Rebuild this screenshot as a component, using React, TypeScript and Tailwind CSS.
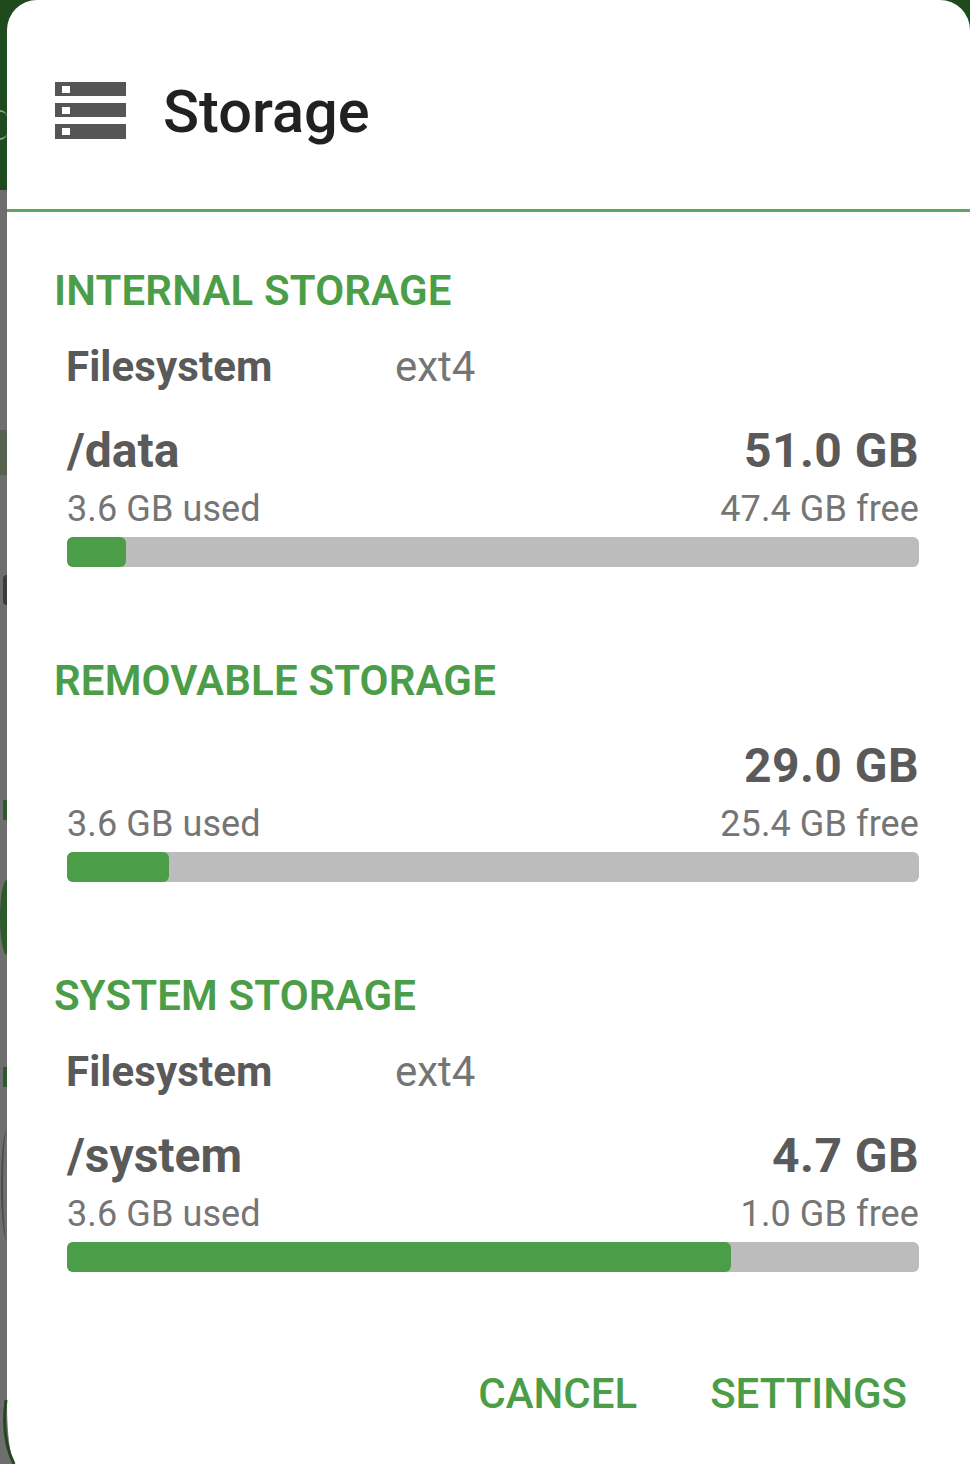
import React from 'react';

type Volume = {
  title: string;
  filesystem?: string;
  mount?: string;
  total: string;
  used: string;
  free: string;
  fill: number;
};

const volumes: Volume[] = [
  { title: 'INTERNAL STORAGE', filesystem: 'ext4', mount: '/data', total: '51.0 GB', used: '3.6 GB used', free: '47.4 GB free', fill: 59 },
  { title: 'REMOVABLE STORAGE', total: '29.0 GB', used: '3.6 GB used', free: '25.4 GB free', fill: 102 },
  { title: 'SYSTEM STORAGE', filesystem: 'ext4', mount: '/system', total: '4.7 GB', used: '3.6 GB used', free: '1.0 GB free', fill: 664 },
];

const StorageIcon = () => (
  <svg width="72" height="58" viewBox="0 0 72 58" className="shrink-0">
    <path fill="#555555" d="M0 0h71v14H0zM0 21h71v14H0zM0 42h71v15H0z" />
    <path fill="#ffffff" d="M7 4h8v7H7zM7 25h8v7H7zM7 46h8v7H7z" />
  </svg>
);

const VolumeSection = ({ volume }: { volume: Volume }) => (
  <section className="flex flex-col">
    <h2 className="ml-[47px] text-[42px] leading-[48px] font-semibold tracking-[0.15px] text-[#4b9e47]">{volume.title}</h2>
    <div className="ml-[60px] mr-[51px] flex flex-col">
      {volume.filesystem && (
        <div className="mt-[27px] flex h-[48px] items-center">
          <span className="-ml-px w-[329px] text-[42px] font-bold tracking-[0.1px] text-[#5a5a5a]">Filesystem</span>
          <span className="text-[42px] text-[#757575]">{volume.filesystem}</span>
        </div>
      )}
      <div className={`flex h-[60px] items-center justify-between ${volume.filesystem ? 'mt-[31px]' : 'mt-[31px]'}`}>
        <span className="text-[48px] font-bold text-[#5a5a5a]">{volume.mount}</span>
        <span className="text-[48px] font-bold tracking-[0.45px] text-[#5a5a5a]">{volume.total}</span>
      </div>
      <div className="mt-[6px] flex h-[44px] items-center justify-between text-[36px] tracking-[0.1px] text-[#757575]">
        <span>{volume.used}</span>
        <span>{volume.free}</span>
      </div>
      <div className="mt-[6px] h-[30px] w-full rounded-[6px] bg-[#bcbcbc]">
        <div className="h-full rounded-[6px] bg-[#4b9e47]" style={{ width: volume.fill }} />
      </div>
    </div>
  </section>
);

export default function App() {
  return (
    <div className="relative h-[1464px] w-[970px] overflow-hidden bg-[#6e6e6e] font-['Roboto',sans-serif]">
      {/* wallpaper showing behind the dialog's left edge */}
      <div className="absolute inset-x-0 top-0 h-[190px] bg-[#1f4a1d]" />
      <div className="absolute top-[110px] left-0 h-[30px] w-[7px] rounded-r-full border-y-2 border-[#8a9a88]" />
      <div className="absolute top-[430px] left-0 h-[45px] w-[7px] bg-[#56634f]" />
      <div className="absolute top-[575px] left-[3px] h-[30px] w-[4px] rounded-l-full bg-[#3c3c3c]" />
      <div className="absolute top-[800px] left-[3px] h-[20px] w-[4px] bg-[#2c5a2a]" />
      <div className="absolute top-[880px] left-0 h-[75px] w-[7px] rounded-l-[7px_38px] bg-[#2c5a2a]" />
      <div className="absolute top-[1067px] left-[3px] h-[20px] w-[4px] bg-[#2c5a2a]" />
      <div className="absolute top-[1130px] left-[1px] h-[110px] w-[6px] rounded-l-[6px_55px] border-l-2 border-[#4a4a4a]" />

      <div className="relative ml-[7px] flex h-full flex-col rounded-t-[30px] rounded-bl-[9px_60px] bg-white">
        <header className="flex h-[212px] shrink-0 items-center gap-[36px] border-b-[3px] border-[#5fa55c] pt-[13px] pl-12">
          <StorageIcon />
          <h1 className="pt-[4px] text-[59.5px] font-medium text-[#212121]">Storage</h1>
        </header>
        <div className="mt-[55px] flex flex-col gap-[90px]">
          {volumes.map((v) => (
            <VolumeSection key={v.title} volume={v} />
          ))}
        </div>
        <footer className="mt-auto flex h-[142px] justify-end gap-[73px] pt-[40px] pr-[63px] text-[42px] font-medium text-[#4b9e47]">
          <span>CANCEL</span>
          <span>SETTINGS</span>
        </footer>
      </div>

      {/* dark rim of the wallpaper circle at the bottom corner */}
      <svg width="20" height="64" viewBox="0 0 20 64" className="absolute bottom-0 left-0">
        <path d="M6 0C3 22 5 46 14 64" fill="none" stroke="#24471f" strokeWidth="3" />
      </svg>
    </div>
  );
}
